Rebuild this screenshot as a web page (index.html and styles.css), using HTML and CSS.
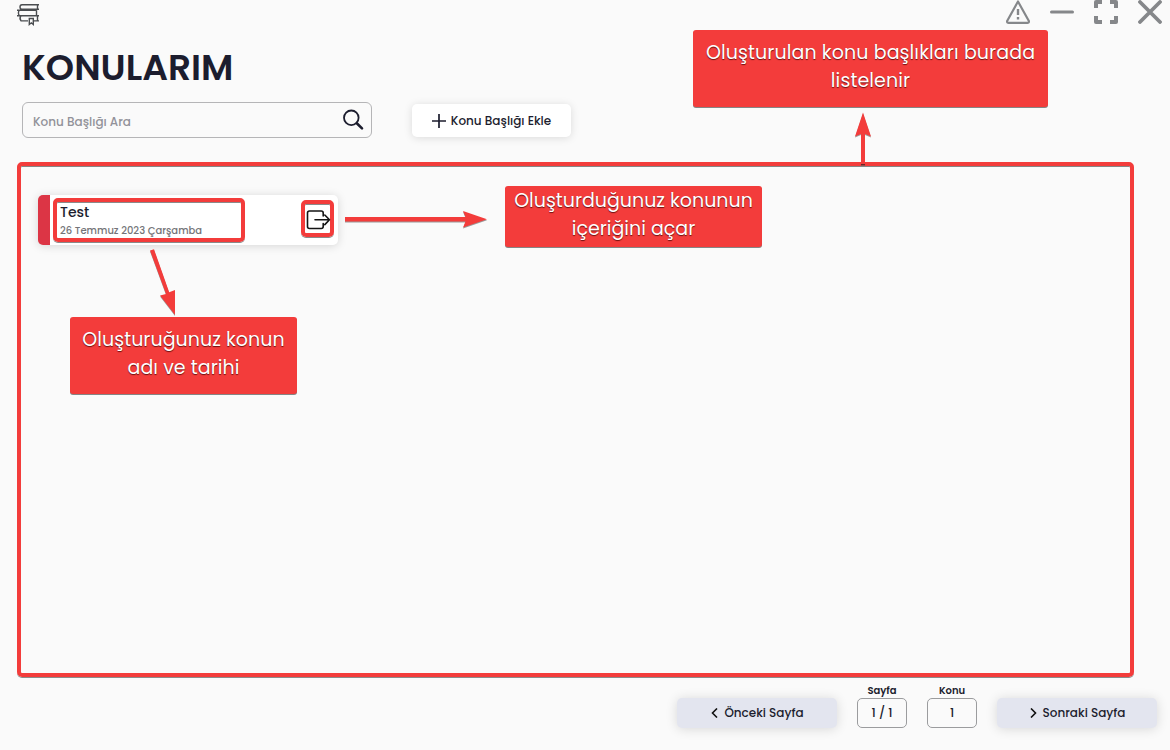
FILE: index.html
```html
<!DOCTYPE html>
<html lang="tr">
<head>
<meta charset="utf-8">
<title>Konularım</title>
<link rel="stylesheet" href="styles.css">
</head>
<body>
<div class="app">
  <header class="titlebar">
    <svg class="logo" width="24" height="24" viewBox="0 0 24 24" fill="none" stroke="#4a4d50" stroke-width="1.4">
      <path d="M23 1.700H6Q4 1.700 4 3.900T6 6.200H23M21.500 1.700V6.200M1 7.300H20.500M3 7.300Q1.800 10 3 12.400M20.500 7.300V12.400M1 12.700H23M5 12.700Q3 15.500 5 17.900H12M18 17.900H23M21.500 12.700V17.900M13.300 15.500H17.300V21.500L15.300 19.800L13.300 21.500Z"/>
    </svg>
    <div class="window-tools">
      <svg width="24" height="24" viewBox="0 0 24 24" fill="none" stroke="#85878a" stroke-width="2.2" stroke-linejoin="round"><path d="M12 1.500L23 21.200Q23 22.800 21.500 22.800H2.500Q1 22.800 1 21.200Z"/><path d="M12 9V15M12 17V19.500" stroke-width="2.400"/></svg>
      <svg width="24" height="24" viewBox="0 0 24 24" fill="none" stroke="#85878a" stroke-width="3" stroke-linecap="round"><path d="M1.500 12H22.500"/></svg>
      <svg width="24" height="24" viewBox="0 0 24 24" fill="none" stroke="#85878a" stroke-width="4" stroke-linejoin="round"><path d="M2 8V2H8M16 2H22V8M22 16V22H16M8 22H2V16"/></svg>
      <svg width="24" height="24" viewBox="0 0 24 24" fill="none" stroke="#85878a" stroke-width="3.800" stroke-linecap="round"><path d="M2 2L22 22M22 2L2 22"/></svg>
    </div>
  </header>
  <h1 class="title"><span>KONULARIM</span></h1>
  <div class="toolbar">
    <div class="search"><span class="search-text">Konu Başlığı Ara</span>
      <svg width="22" height="22" viewBox="0 0 22 22" fill="none" stroke="#1c1d2e" stroke-linecap="round"><circle cx="9.300" cy="8.800" r="7.300" stroke-width="1.800"/><path d="M14.800 14.300L20 19.400" stroke-width="2.600"/></svg>
    </div>
    <div class="add"><svg width="14" height="14" viewBox="0 0 14 14" stroke="#1c1d2e" stroke-width="1.700"><path d="M7 0V14M0 7H14"/></svg><span>Konu Başlığı Ekle</span></div>
  </div>
  <main class="list">
    <article class="card">
      <div class="card-info"><div class="card-name"><span>Test</span></div><div class="card-date"><span>26 Temmuz 2023 Çarşamba</span></div></div>
      <div class="card-open"><svg width="25" height="22" viewBox="0 0 25 22" fill="none" stroke="#141414" stroke-width="1.600" stroke-linecap="round" stroke-linejoin="round"><path d="M17.200 7V4Q17.200 2 15.200 2H3.500Q1.500 2 1.500 4V17.500Q1.500 19.500 3.500 19.500H15.200Q17.200 19.500 17.200 17.500V14.500M9 10.800H23.500M18.800 6L23.500 10.800L18.800 15.600"/></svg></div>
    </article>
  </main>
  <footer class="pager">
    <div class="page-button"><svg width="7" height="10" viewBox="0 0 7 10" fill="none" stroke="#111" stroke-width="1.600"><path d="M6 .5L1.500 5L6 9.500"/></svg><span>Önceki Sayfa</span></div>
    <div class="counter"><span class="counter-label">Sayfa</span><div class="counter-box"><span>1 / 1</span></div></div>
    <div class="counter"><span class="counter-label">Konu</span><div class="counter-box"><span>1</span></div></div>
    <div class="page-button"><svg width="7" height="10" viewBox="0 0 7 10" fill="none" stroke="#111" stroke-width="1.600"><path d="M1 .5L5.500 5L1 9.500"/></svg><span>Sonraki Sayfa</span></div>
  </footer>
  <svg class="arrows" width="1170" height="750" viewBox="0 0 1170 750" fill="#f33c3b">
    <path d="M861 164V134L855 136.500L863 112.500L871 136.500L865 134V164Z"/>
    <path d="M861 164.500H865" stroke="#6b2525" stroke-width="1"/>
    <path d="M345 217H465.500L463 211L487 219.300L463 227.500L465.500 221.500H345Z"/>
    <path d="M150 250.500L154 249.200L169.200 292.200L175 290L175 315L160 295.500L166 294Z"/>
  </svg>
  <div class="note note-list"><span>Oluşturulan konu başlıkları burada</span><br><span>listelenir</span></div>
  <div class="note note-open"><span>Oluşturduğunuz konunun</span><br><span>içeriğini açar</span></div>
  <div class="note note-name"><span>Oluşturuğunuz konun</span><br><span>adı ve tarihi</span></div>
</div>
</body>
</html>
```
FILE: styles.css
```css
* { box-sizing: border-box; }
body { margin: 0; background: #fafafa; color: #1c1d2e; font-family: Poppins, Inter, sans-serif; }
svg { display: block; flex: none; }
span { white-space: nowrap; }
.app { position: relative; width: 1170px; height: 750px; overflow: hidden; display: flex; flex-direction: column; }
.titlebar { height: 40px; flex: none; display: flex; justify-content: space-between; align-items: flex-start; padding: 0 8px 0 16px; }
.logo { margin-top: 3px; }
.window-tools { display: flex; gap: 20px; }
.title { margin: 0; height: 62px; padding: 0 0 8px 22px; flex: none; display: flex; align-items: center; font-size: 36px; font-weight: 600; }
.toolbar { display: flex; gap: 40px; height: 60px; flex: none; padding-left: 22px; }
.search { width: 350px; height: 36px; border: 1.500px solid #b5b5b7; border-radius: 6px; display: flex; align-items: center; justify-content: space-between; padding: 0 7px 0 10px; color: #929299; font-size: 12px; font-weight: 500; }
.search-text { padding-top: 3px; }
.add { width: 159px; height: 33px; margin-top: 2px; background: #fff; border-radius: 5px; box-shadow: 0 1px 9px rgba(0,0,0,.13); display: flex; align-items: center; justify-content: center; gap: 5px; font-size: 12px; font-weight: 500; }
.list { width: 1117px; height: 515px; flex: none; margin-left: 17px; border: 4px solid #f33c3b; border-radius: 5px; padding: 29px 17px; box-shadow: inset 0 1px 0 #858585, 0 1px 0 #8b8b8b; }
.card { width: 300px; height: 50px; border-left: 12px solid #dc3545; border-radius: 5px; background: #fff; box-shadow: 0 1px 10px rgba(0,0,0,.15); display: flex; justify-content: space-between; padding: 3px 4px 3px 3px; }
.card-info, .card-open { border: 4px solid #f33c3b; border-radius: 5px; box-shadow: inset 0 1px 0 #8a8a8a, 0 1px 0 #8a8a8a; }
.card-info { width: 192px; height: 44px; padding: 0 3px; }
.card-name { height: 20px; line-height: 21px; font-size: 14px; font-weight: 500; }
.card-date { height: 15px; line-height: 18px; font-size: 10px; font-weight: 500; color: #747478; }
.card-open { width: 33px; height: 37px; margin-top: 2px; padding: 5px 0 0 1px; }
.pager { display: flex; gap: 20px; padding: 7px 12px 0 677px; align-items: flex-start; }
.page-button { width: 160px; height: 30px; margin-top: 14px; background: #e3e5ef; border-radius: 5px; box-shadow: 0 1px 12px rgba(0,0,0,.14); display: flex; align-items: center; justify-content: center; gap: 6px; padding-left: 1px; font-size: 12px; font-weight: 500; }
.counter { width: 50px; display: flex; flex-direction: column; align-items: center; }
.counter-label { height: 14px; line-height: 14px; font-size: 10px; font-weight: 600; }
.counter-box { width: 50px; height: 30px; border: 1px solid #9b9c9e; border-radius: 5px; display: flex; align-items: center; justify-content: center; font-size: 12px; font-weight: 500; }
.arrows { position: absolute; left: 0; top: 0; filter: drop-shadow(0 1px 0 rgba(90,90,90,.6)); }
.note { position: absolute; background: #f33c3b; color: #fff; border-radius: 3px; text-align: center; font-size: 19px; line-height: 28px; box-shadow: 0 1px 0 #858585; text-shadow: 0 1px 1px rgba(60,0,0,.75); }
.note-list { left: 693px; top: 30px; width: 355px; height: 77px; padding-top: 9px; letter-spacing: .1px; }
.note-open { left: 505px; top: 186px; width: 257px; height: 61px; padding-top: 1px; }
.note-name { left: 70px; top: 317px; width: 227px; height: 77px; padding-top: 9px; letter-spacing: .05px; }
```
